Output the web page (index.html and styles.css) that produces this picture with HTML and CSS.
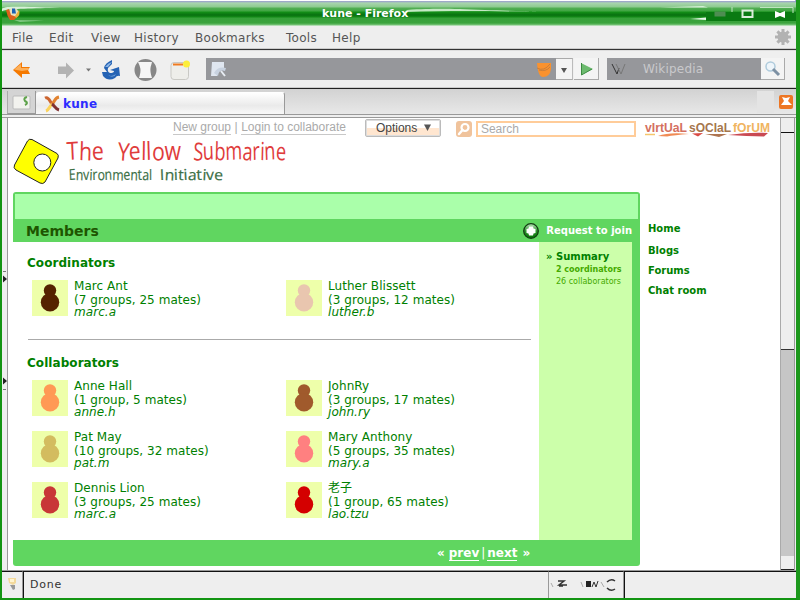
FILE: index.html
```html
<!DOCTYPE html>
<html lang="en">
<head>
<meta charset="utf-8">
<title>kune - Firefox</title>
<link rel="stylesheet" href="styles.css">
</head>
<body>
<svg class="defs" width="0" height="0">
  <symbol id="person" viewBox="0 0 36 36"><circle cx="18" cy="10.500" r="6.200"/><circle cx="18" cy="22.300" r="9.200"/></symbol>
</svg>
<div class="window">
  <header class="titlebar">
    <svg class="title-art" width="800" height="26" viewBox="0 0 800 26">
      <path d="M0 10C4 5 18 7 60 7.600C30 9 8 8 0 12z" fill="#d8f0d8"/>
      <path d="M14 20.500L44 20.800L20 21.400z" fill="#c8ecc8"/>
      <path d="M407 10C440 8 450 9 485 10C500 10.300 520 11 540 12C500 11 450 10.500 405 12z" fill="#c4e8c4"/>
      <path d="M660 7.500L703 6L708 7.500z" fill="#d8f0d8"/><path d="M690 19L706 17.500V20z" fill="#e8f8e8"/>
      <rect x="706" y="12" width="91" height="9" fill="#0a7a12"/>
      <path d="M732 7V12M760 7.500H793V13" fill="none" stroke="#bfe4c0" stroke-width="1"/>
      <path d="M795 0H800V26H799V10z" fill="#8c8cd0"/>
      <g><circle cx="13.500" cy="13" r="5" fill="#e9e2c0"/><path d="M12 8.500h3l1 5h-4z" fill="#1b62b4"/><path d="M6 10L9 9L11 15L17 17L14 20H10Q7 16 6 10z" fill="#dd611b"/><path d="M15 16L19 10Q21 15 16 18z" fill="#e8b33a"/></g>
      <rect x="714.500" y="11.500" width="11" height="5" fill="#4f8d52"/>
      <rect x="742.500" y="10.500" width="10" height="6.500" fill="none" stroke="#dcecdc" stroke-width="2"/>
      <path d="M775 11l5 2 5-2v7l-5-2-5 2z" fill="#fff"/>
    </svg>
    <span class="title">kune - Firefox</span>
  </header>

  <nav class="menubar">
    <span>File</span><span>Edit</span><span>View</span><span>History</span><span>Bookmarks</span><span>Tools</span><span>Help</span>
    <svg class="throbber" width="16" height="16" viewBox="-8 -8 16 16"><circle r="5.500" fill="#b2b2b2"/><path d="M0-8V8M-8 0H8M-5.600-5.600L5.600 5.600M-5.600 5.600L5.600-5.600" stroke="#b2b2b2" stroke-width="3"/></svg>
  </nav>

  <div class="toolbar">
    <svg class="tools" width="190" height="38" viewBox="0 0 190 38">
      <path d="M13 20L22 12V17H30L28 20L30 24H22V28z" fill="#f57900"/><path d="M14 19.500L21 14V18H29L28 20L22 21z" fill="#fcaf5a"/>
      <path d="M58 16.500H66V12.500L74 20.500L66 28.500V24H58z" fill="#b3b3b3"/>
      <path d="M86 18.500h5l-2.500 3z" fill="#777"/>
      <path d="M104 18Q105 13 112 10V14L108 18Q107 22 110 23Q114 23 114 21L110 20L119 17L120 26Q117 25 115 28Q108 32 103 26L102 22L107 22z" fill="#2563b4"/><path d="M105 17Q108 13 112 12L108 17zM106 24Q111 28 116 24Q113 29 106 24z" fill="#8db6e6"/>
      <circle cx="145.500" cy="20" r="11" fill="#878787"/><path d="M138 12H152C151 17 149 18 152 28H139C142 19 140 17 138 12z" fill="#f6f6f6"/>
      <rect x="171" y="12.500" width="17.500" height="17" rx="3" fill="#eeeeea" stroke="#c9c9c4"/><path d="M173 14.500H183" stroke="#f07a20" stroke-width="2"/><circle cx="186.500" cy="14" r="3.500" fill="#fcee3a"/>
    </svg>
    <div class="address">
      <svg width="24" height="22" viewBox="0 0 24 22"><path d="M6 4H18V11L12 13L11 18H5z" fill="#dfe6f0"/><path d="M8 15Q12 8 20 10L19 13Q13 11 12 18" fill="#c8d2e0"/><path d="M15 13l4 5" stroke="#e8edf3" stroke-width="2"/></svg>
      <svg class="feed" width="20" height="22" viewBox="0 0 20 22"><path d="M3 5H17V11Q16 19 9 19Q4 19 3 5z" fill="#fa922e"/><path d="M3 10Q10 14 16 6M5 12Q12 14 16 9" stroke="#c97f3c" fill="none"/></svg>
    </div>
    <div class="drop"><svg width="16" height="22"><path d="M5 9h6l-3 5z" fill="#555"/></svg></div>
    <div class="go"><svg width="24" height="22"><path d="M7 5L19 11L7 17z" fill="#6dbb6f"/><path d="M7.500 5V17L18 11" stroke="#3c8b42" fill="none"/></svg></div>
    <div class="engine">
      <svg width="20" height="22" viewBox="0 0 20 22"><path d="M5 6L10 16L12 10" stroke="#333" fill="none"/><path d="M9 6L14 16L18 6" stroke="#777" fill="none"/></svg>
      <span>Wikipedia</span>
    </div>
    <div class="go find"><svg width="24" height="22"><circle cx="9.500" cy="8.500" r="4.500" fill="#eef5fa" stroke="#afcbdc" stroke-width="1.500"/><path d="M12 11l6 6" stroke="#7d91a4" stroke-width="3"/></svg></div>
  </div>

  <div class="tabs">
    <div class="newtab"><svg width="27" height="22" viewBox="0 0 27 22"><rect x="5" y="5" width="17" height="13" rx="1" fill="#f2f2ee" stroke="#bbb"/><path d="M19 6Q15 7 17 10Q21 12 17 14" stroke="#5da24a" stroke-width="2" fill="none"/></svg></div>
    <div class="tab">
      <svg width="18" height="18" viewBox="0 0 18 18"><path d="M2 3C6 1 7 7 9 9" stroke="#cc6530" stroke-width="3" fill="none"/><path d="M16 2C11 3 12 7 9 9" stroke="#e28330" stroke-width="3" fill="none"/><path d="M9 9C6 12 6 15 3 16" stroke="#fbd35d" stroke-width="3" fill="none"/><path d="M9 9C12 11 12 14 16 15" stroke="#803030" stroke-width="3" fill="none"/></svg>
      <span>kune</span>
    </div>
    <div class="tabspace"></div>
    <svg class="close" width="16" height="16" viewBox="0 0 16 16"><rect x="1" y="1" width="14" height="14" rx="2" fill="#ed7624"/><path d="M4 3L8 4L12 3L10 7L14 11H3L6 7z" fill="#fff"/></svg>
  </div>

  <div class="viewport">
    <div class="grip"><svg width="5" height="451"><path d="M1 157.500l4 3.500-4 3.500zM1 259.500l4 3.500-4 3.500z" fill="#222"/><path d="M1 153.500h3M1 271.500h3" stroke="#777"/></svg></div>
    <main class="page">
      <div class="top">
        <svg class="logo" width="290" height="74" viewBox="8 118 290 74">
          <path d="M32 139.500Q29 138.500 27.500 141L14.500 165Q13 168 16 170L40 183Q43 184.500 45 182L58 158Q59 155 57 153.500z" fill="#ff0" stroke="#222"/>
          <circle cx="42.300" cy="162.500" r="8.500" fill="#fff" stroke="#222"/>
          <g class="name">
            <text x="67" y="160" textLength="37" lengthAdjust="spacingAndGlyphs" rotate="-3 2 -2">The</text>
            <text x="117" y="160" textLength="64" lengthAdjust="spacingAndGlyphs" rotate="5 -3 1 -2 3 0">Yellow</text>
            <text x="193" y="160" textLength="93" lengthAdjust="spacingAndGlyphs" rotate="4 -3 2 -2 3 -2 2 -3 2">Submarine</text>
          </g>
          <g class="motto">
            <text x="69" y="180" textLength="83" lengthAdjust="spacingAndGlyphs" rotate="-3 2 -2 3 -2 2 -3 2 -2 3 -2 2 0">Environmental</text>
            <text x="160" y="180" textLength="63" lengthAdjust="spacingAndGlyphs" rotate="-2 3 -2 2 -3 2 -2 3 -2 2">Initiative</text>
          </g>
        </svg>
        <div class="actions">
          <a>New group</a><i>|</i><a>Login to collaborate</a>
          <button>Options <svg width="8" height="8"><path d="M0 0.500h7l-3.500 6.500z" fill="#555"/></svg></button>
          <svg class="glass" width="16" height="16"><rect width="16" height="16" rx="3" fill="#f0c39c"/><circle cx="9" cy="6.500" r="3.500" fill="none" stroke="#fff" stroke-width="2.200"/><path d="M6.500 9L3 13" stroke="#fff" stroke-width="2.500" stroke-linecap="round"/></svg>
          <div class="search">Search</div>
          <svg class="forum" width="128" height="18" viewBox="0 0 128 18">
            <text y="11.500" x="1" fill="#d4705f" textLength="42" lengthAdjust="spacingAndGlyphs">vIrtUaL</text>
            <text y="11.500" x="45" fill="#a5764d" textLength="42" lengthAdjust="spacingAndGlyphs">sOCIaL</text>
            <text y="11.500" x="89" fill="#f0b45f" textLength="37" lengthAdjust="spacingAndGlyphs">fOrUM</text>
            <path d="M1 14.500h10" stroke="#f5c66c" stroke-width="1.500"/><path d="M14 16Q25 12 45 14Q30 15 23 16.500z" fill="#f08b55"/><path d="M48 13.500l11-.5-5 3.500z" fill="#d94b45"/><path d="M61 14h22l-8 3z" fill="#ad7450"/><path d="M84 15Q105 12 124 13L120 16.500Q103 16 84 15z" fill="#c94a53"/>
          </svg>
        </div>
      </div>
      <div class="columns">
        <section class="panel">
          <div class="banner"></div>
          <div class="heading"><h1>Members</h1>
            <svg width="18" height="18"><defs><linearGradient id="orb" x2="0" y2="1"><stop stop-color="#bde6bd"/><stop offset=".5" stop-color="#2d922d"/><stop offset="1" stop-color="#007000"/></linearGradient></defs><circle cx="9" cy="9" r="7.300" fill="url(#orb)" stroke="#123d12" stroke-width="1.300"/><path d="M7 4.500h4L11.500 6.500L13.500 7v4l-2 .5L11 13.500H7L6.500 11.500L4.500 11V7L6.500 6.500z" fill="#fff"/></svg>
            <b>Request to join</b></div>
          <div class="body">
            <div class="people">
              <h2>Coordinators</h2>
              <div class="grid">
                <div class="card"><svg class="brown"><use href="#person"/></svg><p>Marc Ant<br>(7 groups, 25 mates)<em>marc.a</em></p></div>
                <div class="card"><svg class="pale"><use href="#person"/></svg><p>Luther Blissett<br>(3 groups, 12 mates)<em>luther.b</em></p></div>
              </div>
              <hr>
              <h2>Collaborators</h2>
              <div class="grid">
                <div class="card"><svg class="orange"><use href="#person"/></svg><p>Anne Hall<br>(1 group, 5 mates)<em>anne.h</em></p></div>
                <div class="card"><svg class="sienna"><use href="#person"/></svg><p>JohnRy<br>(3 groups, 17 mates)<em>john.ry</em></p></div>
                <div class="card"><svg class="sand"><use href="#person"/></svg><p>Pat May<br>(10 groups, 32 mates)<em>pat.m</em></p></div>
                <div class="card"><svg class="pink"><use href="#person"/></svg><p>Mary Anthony<br>(5 groups, 35 mates)<em>mary.a</em></p></div>
                <div class="card"><svg class="brick"><use href="#person"/></svg><p>Dennis Lion<br>(3 groups, 25 mates)<em>marc.a</em></p></div>
                <div class="card"><svg class="red"><use href="#person"/></svg><p>老子<br>(1 group, 65 mates)<em>lao.tzu</em></p></div>
              </div>
            </div>
            <aside><b class="sum">» Summary</b><b>2 coordinators</b><span>26 collaborators</span></aside>
          </div>
          <footer>«<a>prev</a><i>|</i><a>next</a><span>»</span></footer>
        </section>
        <nav class="side"><a>Home</a><a>Blogs</a><a>Forums</a><a>Chat room</a></nav>
      </div>
    </main>
    <div class="scroll"><div class="up"></div><div class="thumb"></div><div class="track"></div><div class="down"></div></div>
  </div>

  <div class="status">
    <div class="bulb"><svg width="12" height="18"><path d="M2 3h8v5l-3 2-4-2z" fill="#f3d99b"/><path d="M4 4h4v3H4z" fill="#fff4d0"/><path d="M4 10h5v4l-2 1z" fill="#999"/></svg></div>
    <div class="done">Done</div>
    <div class="extras"><svg width="74" height="24" viewBox="0 0 74 24"><g fill="none" stroke="#333"><path d="M9 9h6l-5 4h8M10 14h4" stroke-width="1.500"/><path d="M2 11l2 4M32 10l2 5M52 10l3 5" stroke="#aaa"/><path d="M43 15l2-5 2 5 2-6" /><path d="M58 10q4-4 8-1M58 16q4 4 8 1" stroke-width="1.500"/></g><path d="M37 9h5v6h-5z" fill="#222"/></svg></div>
    <div class="rest"></div>
  </div>
</div>
</body>
</html>
```

FILE: styles.css
```css
* { box-sizing: border-box; }
body { margin: 0; font: 12px "DejaVu Sans", "Noto Sans CJK SC", sans-serif; }
svg { display: block; flex: none; }
.defs { position: absolute; }
h1, h2, p { margin: 0; }
.window { width: 800px; height: 600px; display: flex; flex-direction: column; background: #eee; overflow: hidden; border-bottom: 2px solid #129412; border-left: 2px solid #129412; border-right: 4px solid #1c981c; }

.titlebar { position: relative; flex: none; height: 26px; margin: 0 -4px 0 -2px; background: linear-gradient(#fff 0, #fff 1px, #9a9ad0 1px, #a8d4ae 3px, #8cca8e 7px, #52ae54 8px, #3fa541 11px, #149018 12px, #087010 15px, #138a17 17px, #37a13a 18px, #3ba43d 23px, #79c47a 25px, #eaf5ea 26px); }
.title-art { position: absolute; left: 0; top: 0; }
.title { position: absolute; left: 322px; top: 7px; width: 90px; white-space: nowrap; color: #fff; font-weight: bold; font-size: 11px; line-height: 13px; }

.menubar { flex: none; height: 24px; display: grid; grid-template-columns: 37px 42px 43px 61px 91px 46px 1fr 16px; align-items: center; padding: 0 5px 0 10px; border-bottom: 1px solid #333; box-shadow: inset 0 -1px #ccc; color: #555; background: #eee; font-size: 12px; letter-spacing: .3px; }
.throbber { margin-top: -1px; }

.toolbar { flex: none; height: 39px; display: flex; align-items: center; border-bottom: 1px solid #222; box-shadow: inset 0 1px #ddd, inset 0 -1px #ccc; background: #efefef; }
.tools { margin-left: -2px; }
.address { display: flex; justify-content: space-between; width: 350px; height: 22px; margin-left: 16px; background: #96979b; }
.feed { margin-right: 2px; }
.drop { width: 17px; height: 22px; background: #f4f4f4; border-right: 1px solid #bbb; border-top: 1px solid #aaa; border-bottom: 1px solid #aaa; margin-left: 0; }
.go { width: 25px; height: 22px; background: #f4f4f4; border-right: 1px solid #aaa; border-bottom: 1px solid #aaa; margin-left: 1px; }
.engine { display: flex; align-items: center; width: 154px; height: 22px; margin-left: 8px; background: #96979b; color: #c9c9cc; }
.engine span { margin-left: 16px; letter-spacing: .2px; }
.find { margin-left: 0; width: 24px; }

.tabs { flex: none; height: 29px; display: flex; padding: 2px 2px 0 5px; background: linear-gradient(#d2d2d2, #e8e8e8 25px, #999 25px, #999 26px, #eee 26px, #eee 28px, #999 28px); }
.newtab { width: 29px; height: 23px; background: #d4d4d4; border-right: 1px solid #999; border-left: 1px solid #aaa; border-bottom: 1px solid #999; }
.tab { width: 249px; height: 22px; margin-top: 1px; display: flex; align-items: center; padding-left: 7px; background: linear-gradient(#fff, #eaeaea 60%, #f8f8f8); border-right: 1px solid #999; border-top: 1px solid #fff; border-radius: 3px 3px 0 0; color: #2c2cff; font-weight: bold; }
.tab span { margin-left: 2px; font-size: 12px; letter-spacing: .3px; }
.tabspace { flex: 1; height: 22px; margin-right: 4px; border-right: 17px solid #e4e4e4; }
.close { margin: 3px 0 0; }

.viewport { flex: none; height: 452px; display: flex; }
.grip { width: 6px; border-right: 1px solid #999; background: #eee; }
.page { width: 772px; background: #fff; }
.top { height: 74px; position: relative; }
.name, .motto { font-family: "Open Sans", sans-serif; }
.name { font-size: 25px; fill: #e03c3c; }
.motto { font-size: 15px; fill: #3a6e44; stroke: #3a6e44; stroke-width: .2; }
.actions { position: absolute; left: 165px; top: 0; display: flex; align-items: flex-start; height: 20px; font: 12px/14px "Liberation Sans", sans-serif; color: #aaa; padding-top: 1px; }
.actions a { border-bottom: 1px solid #c8c8c8; height: 15px; margin-top: 1px; white-space: nowrap; line-height: 15px; }
.actions i { font-style: normal; margin: 1px 3.5px 0; }
.actions button { display: flex; align-items: center; gap: 7px; width: 76px; height: 18px; margin-left: 19px; padding: 0 0 1px 10px; border: 1px solid #bbb; box-shadow: inset 0 0 0 1px #ddd; border-radius: 2px; font: inherit; color: #444; background: linear-gradient(#fff 50%, #ffe6d0 50%); }
.glass { margin: 2px 4px 0 15px; }
.search { width: 160px; height: 16px; margin-top: 2px; border: 2px solid #fc9; line-height: 13px; padding-left: 3px; }
.forum { margin: 1px 0 0 8px; font: bold 13px "Liberation Sans", sans-serif; }

.columns { display: flex; padding-left: 5px; }
.panel { width: 627px; height: 374px; background: #60d660; border-radius: 3px; display: flex; flex-direction: column; padding-top: 2px; }
.banner { height: 25px; margin: 0 2px; background: #aaffaa; }
.heading { height: 23px; display: flex; align-items: center; padding: 0 8px 0 13px; }
.heading h1 { flex: 1; font-size: 14px; color: #1e5500; line-height: 23px; padding-top: 1px; }
.heading b { margin-left: 6px; color: #fff; font-size: 10px; white-space: nowrap; }
.body { height: 298px; display: flex; padding-right: 8px; }
.people { width: 526px; background: #fff; padding: 13px 8px 0 14px; color: #008000; }
h2 { font-size: 12px; line-height: 15px; letter-spacing: .06px; padding-top: 1px; height: 15px; }
.grid { display: grid; grid-template-columns: 254px 1fr; grid-auto-rows: 51px; padding: 10px 0 0 5px; }
.card { display: flex; gap: 6px; white-space: nowrap; }
.card svg { width: 36px; height: 36px; background: #eeffaa; }
.card p { line-height: 14px; margin-top: -1px; letter-spacing: .05px; }
.card em { display: block; line-height: 11px; }
.brown { fill: #552200; } .pale { fill: #e9c6af; } .orange { fill: #ff9955; } .sienna { fill: #a05a2c; }
.sand { fill: #d3bc5f; } .pink { fill: #ff8080; } .brick { fill: #c83737; } .red { fill: #d40000; }
hr { border: 0; height: 1px; background: #aaa; margin: 8px 0 15px 1px; }
aside { width: 93px; background: #ccffaa; padding: 8px 0 0 17px; display: flex; flex-direction: column; font-size: 8px; line-height: 12px; color: #44aa00; white-space: nowrap; }
.sum { font-size: 10px; line-height: 13px; margin: 0 0 1px -10px; color: #008000; }
footer { height: 26px; display: flex; align-items: center; padding-left: 424px; color: #fff; font-weight: bold; line-height: 14px; }
footer a { border-bottom: 1px solid #fff; }
footer a:first-of-type { margin-left: 4px; }
footer i { font-style: normal; font-weight: normal; margin: 0 2px; }
footer span { margin-left: 5px; }
.side { display: flex; flex-direction: column; padding: 30px 0 0 8px; font-size: 10px; font-weight: bold; line-height: 14px; color: #008000; gap: 6px; white-space: nowrap; }
.side a:first-child { margin-bottom: 2px; }

.scroll { width: 15px; display: flex; flex-direction: column; border-left: 1px solid #aaa; background: #c6c6c6; border-right: 1px solid #999; }
.up { height: 15px; background: #eee; border-bottom: 1px solid #111; }
.thumb { height: 217px; background: #eee; border-bottom: 1px solid #333; }
.track { flex: 1; }
.down { height: 14px; background: #eee; border-bottom: 1px solid #222; }

.status { flex: none; height: 28px; display: flex; border-top: 1px solid #999; color: #333; }
.status > div { border-top: 1px solid #111; }
.bulb { width: 21px; padding: 3px 0 0 4px; border-right: 1px solid #999; }
.done { width: 525px; border-left: 1px solid #111; padding: 6px 0 0 6px; letter-spacing: .8px; font-size: 11px; line-height: 13px; }
.extras { width: 76px; border-left: 1px solid #999; border-right: 1px solid #999; }
.rest { flex: 1; border-left: 1px solid #111; }
```
